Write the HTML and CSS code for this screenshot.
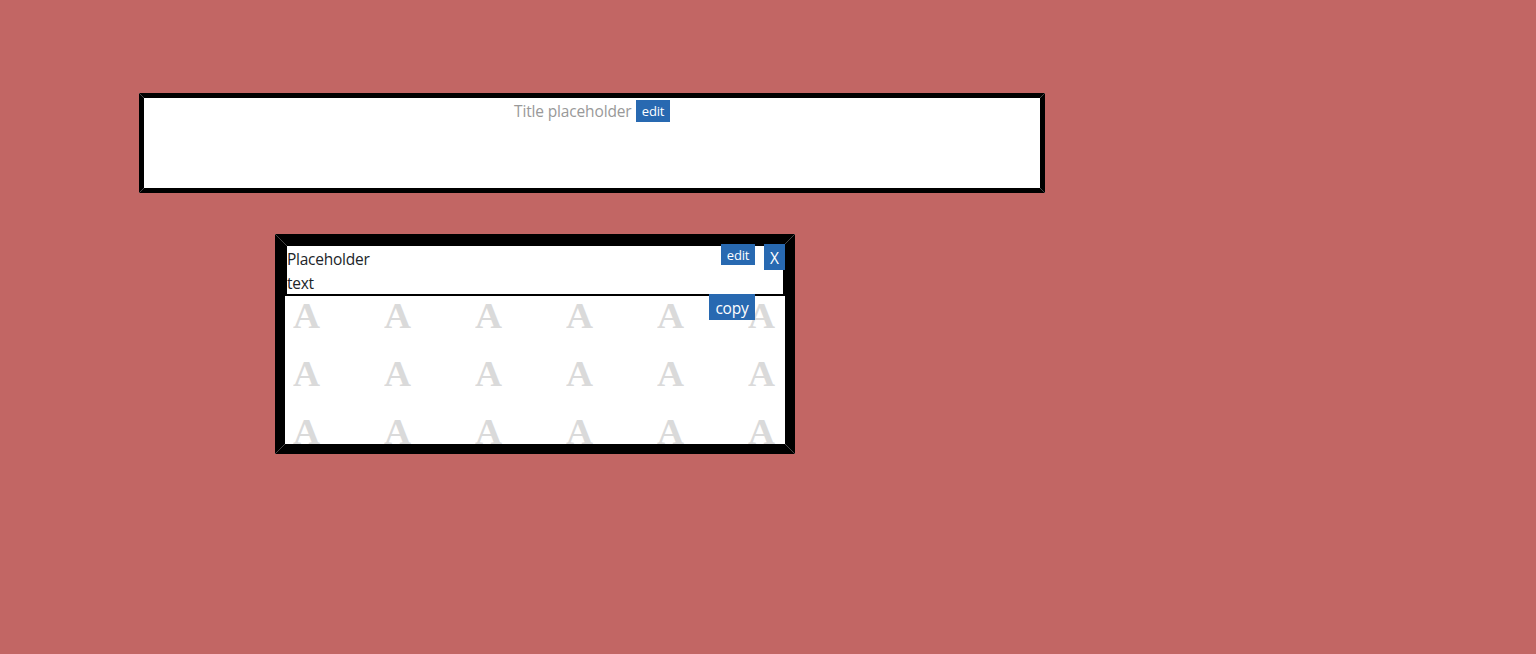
FILE: index.html
```html
<!DOCTYPE html>
<html lang="en">
<head>
<meta charset="utf-8">
<title>Editor</title>
<link rel="stylesheet" href="styles.css">
</head>
<body>
<main class="page">
  <header class="title-box">
    <svg class="miters" width="906" height="100" viewBox="0 0 906 100"><path d="M0 0l5 5M906 0l-5 5M0 100l5-5M906 100l-5-5"/></svg>
    <span class="title-text">Title placeholder</span>
    <button class="btn btn-outline">edit</button>
  </header>
  <section class="card">
    <svg class="miters miters-wide" width="520" height="220" viewBox="0 0 520 220"><path d="M0 0l12 12M520 0l-12 12M0 220l10-10M520 220l-10-10"/></svg>
    <div class="card-head">
      <p class="card-text">Placeholder<br>text</p>
    </div>
    <div class="pattern" aria-hidden="true">
      <span>A</span><span>A</span><span>A</span><span>A</span><span>A</span><span>A</span>
      <span>A</span><span>A</span><span>A</span><span>A</span><span>A</span><span>A</span>
      <span>A</span><span>A</span><span>A</span><span>A</span><span>A</span><span>A</span>
    </div>
    <button class="btn card-edit">edit</button>
    <button class="btn btn-large card-close">X</button>
    <button class="btn btn-large card-copy">copy</button>
  </section>
</main>
</body>
</html>
```

FILE: styles.css
```css
* { box-sizing: border-box; }
body {
  margin: 0;
  background: #c26664;
  font-family: "Open Sans", "Noto Sans", sans-serif;
  overflow: hidden;
}
.page {
  height: 654px;
  padding: 93px 0 0 139px;
}
.title-box {
  position: relative;
  display: flex;
  justify-content: center;
  align-items: flex-start;
  gap: 4px;
  width: 906px;
  height: 100px;
  padding-top: 2px;
  border: 5px solid #000;
  border-radius: 1px;
  background: #fff;
}
.miters {
  position: absolute;
  top: -5px;
  left: -5px;
  fill: none;
  stroke: #555;
  stroke-width: 0.8;
}
.miters-wide {
  top: -10px;
  left: -10px;
  z-index: 1;
}
.title-text {
  width: 118px;
  font-size: 15.5px;
  line-height: 22px;
  letter-spacing: -0.15px;
  white-space: nowrap;
  color: #999;
}
.btn {
  display: flex;
  justify-content: center;
  align-items: center;
  width: 34px;
  height: 21px;
  padding: 1px 0 0;
  border: 0;
  background: #2869b1;
  color: #fff;
  font: 500 13px/17px "Open Sans", "Noto Sans", sans-serif;
  letter-spacing: -0.2px;
}
.btn-outline {
  height: 22px;
  padding-top: 1px;
  border: 1px solid #2869b1;
}
.btn-large {
  height: 26px;
  padding-top: 3px;
  font-size: 15.5px;
}
.card {
  position: relative;
  width: 520px;
  height: 220px;
  margin: 41px 0 0 136px;
  border: 10px solid #000;
  border-radius: 1px;
  background: #fff;
}
.card-head {
  height: 52px;
  border: 2px solid #000;
}
.card-text {
  margin: 0;
  padding-top: 1px;
  font-size: 15.5px;
  line-height: 24px;
  letter-spacing: -0.25px;
  color: #212529;
}
.pattern {
  display: grid;
  grid-template-columns: repeat(6, 91px);
  grid-auto-rows: 58px;
  height: 148px;
  padding-left: 8px;
  overflow: hidden;
  font: bold 36px/40px "Liberation Serif", serif;
  color: #dadada;
}
.pattern span {
  transform: scaleX(1.04);
  transform-origin: 0 0;
}
.card-edit { position: absolute; top: 0; right: 30px; }
.card-close { position: absolute; top: 0; right: 0; width: 21px; }
.card-copy { position: absolute; top: 50px; right: 30px; width: 46px; }
.card .btn { z-index: 2; }
```
